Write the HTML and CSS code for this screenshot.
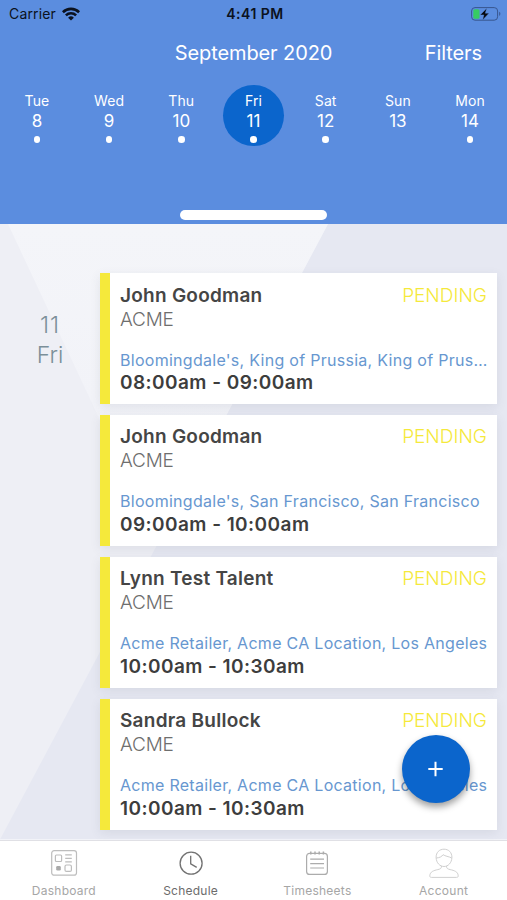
FILE: index.html
```
<!DOCTYPE html>
<html lang="en">
<head>
<meta charset="utf-8">
<title>Schedule</title>
<link rel="stylesheet" href="styles.css">
</head>
<body>
<div class="app">
  <header class="header">
    <div class="status">
      <div class="carrier"><span>Carrier</span>
        <svg width="18" height="14" viewBox="0 0 18 14" fill="none" stroke="#0b1220" stroke-width="2.6"><path d="M.9 5.2a11.6 11.6 0 0 1 16.2 0M3.9 8.4a7.3 7.3 0 0 1 10.2 0"/><path d="M9 13.6 6.1 10.7a4.2 4.2 0 0 1 5.8 0Z" fill="#0b1220" stroke="none"/></svg>
      </div>
      <div class="clock">4:41 PM</div>
      <svg class="battery" width="30" height="14" viewBox="0 0 30 14"><rect x=".6" y=".6" width="26" height="12.6" rx="3.4" fill="none" stroke="#38568f" stroke-width="1"/><path d="M28.2 4.8c1.6.7 1.6 3.5 0 4.2Z" fill="#38568f"/><rect x="2.3" y="2.2" width="6.2" height="9.5" rx="1.5" fill="#36cc62"/><path d="M15.7 1.3 9.2 7.9h3.7l-1.3 5L18 6.2h-3.7Z" fill="#05080f" stroke="#5b8ddf" stroke-width=".4"/></svg>
    </div>
    <div class="titlebar"><h1 class="month">September 2020</h1><a class="filters">Filters</a></div>
    <div class="week">
      <div class="day"><span>Tue</span><b>8</b><i></i></div>
      <div class="day"><span>Wed</span><b>9</b><i></i></div>
      <div class="day"><span>Thu</span><b>10</b><i></i></div>
      <div class="day selected"><span>Fri</span><b>11</b><i></i></div>
      <div class="day"><span>Sat</span><b>12</b><i></i></div>
      <div class="day free"><span>Sun</span><b>13</b><i></i></div>
      <div class="day"><span>Mon</span><b>14</b><i></i></div>
    </div>
    <div class="handle"></div>
  </header>
  <main class="content">
    <svg class="backdrop" viewBox="0 0 507 616" preserveAspectRatio="none">
      <defs><linearGradient id="wedge" x1="0" y1="0" x2="0" y2="1"><stop offset="0" stop-color="#f4f5f9"/><stop offset=".55" stop-color="#f2f3f8"/><stop offset="1" stop-color="#eeeff6"/></linearGradient></defs>
      <path d="M0 0h507v616H0Z" fill="#e6e8f2"/>
      <path d="M0 0h328L0 616Z" fill="#eeeff5"/>
      <path d="M8 0H328L158 320Z" fill="url(#wedge)"/>
    </svg>
    <div class="date"><span class="num">11</span><span>Fri</span></div>
    <div class="list">
      <article class="card">
        <div class="row"><h2>John Goodman</h2><span class="state">PENDING</span></div>
        <p class="company">ACME</p>
        <p class="place">Bloomingdale's, King of Prussia, King of Prus…</p>
        <p class="time">08:00am - 09:00am</p>
      </article>
      <article class="card">
        <div class="row"><h2>John Goodman</h2><span class="state">PENDING</span></div>
        <p class="company">ACME</p>
        <p class="place">Bloomingdale's, San Francisco, San Francisco</p>
        <p class="time">09:00am - 10:00am</p>
      </article>
      <article class="card">
        <div class="row"><h2>Lynn Test Talent</h2><span class="state">PENDING</span></div>
        <p class="company">ACME</p>
        <p class="place">Acme Retailer, Acme CA Location, Los Angeles</p>
        <p class="time">10:00am - 10:30am</p>
      </article>
      <article class="card">
        <div class="row"><h2>Sandra Bullock</h2><span class="state">PENDING</span></div>
        <p class="company">ACME</p>
        <p class="place">Acme Retailer, Acme CA Location, Los Angeles</p>
        <p class="time">10:00am - 10:30am</p>
      </article>
    </div>
    <button class="add" aria-label="Add"><svg width="16" height="16" viewBox="0 0 16 16" stroke="#fff" stroke-width="2"><path d="M7.5 .8v14.4M.3 8h14.4"/></svg></button>
  </main>
  <nav class="tabs">
    <a class="tab">
      <svg width="32" height="32" viewBox="0 0 32 32" fill="none" stroke="#bdbdbd" stroke-width="1.2"><rect x="3.7" y="3.6" width="24.8" height="24.6" rx="2.5"/><rect x="7.4" y="8" width="6.2" height="6.5" rx="1"/><rect x="17" y="18" width="6.4" height="6.4" rx="1.5"/><path d="M17.2 7.8h6.6M17.2 11.3h6.6M17.2 14.8h6.6"/><rect x="8.2" y="19" width="4.6" height="4.6" rx="1.3" fill="#aaa" stroke="none"/></svg>
      <span>Dashboard</span></a>
    <a class="tab active">
      <svg width="32" height="32" viewBox="0 0 32 32" fill="none" stroke="#727272" stroke-width="1.3"><circle cx="16.1" cy="16.2" r="11"/><path d="M15.7 8.8v8l6 3.6"/></svg>
      <span>Schedule</span></a>
    <a class="tab">
      <svg width="32" height="32" viewBox="0 0 32 32" fill="none" stroke="#acacac" stroke-width="1.2"><rect x="5.6" y="6.4" width="20.8" height="21" rx="3"/><path d="M9.2 12.2h13.8M9.2 16.6h13.8M9.2 21h13.8"/><path d="M9.8 4.6v2.8M14 4.6v2.8M18.2 4.6v2.8M22.4 4.6v2.8" stroke-width="1.5"/></svg>
      <span>Timesheets</span></a>
    <a class="tab account">
      <svg width="32" height="32" viewBox="0 0 32 32" fill="none" stroke="#d0d0d0" stroke-width="1"><path d="M8.1 10.5C8 5.4 11.4 2.2 16 2.2s8 3.2 7.9 8.3c-.2 5.4-3.8 9-7.9 9s-7.7-3.6-7.9-9Z"/><path d="M8.2 11c3.4-.2 5.6-1.4 6.9-3.3 2.2 1.6 5.2 1.6 8.7 3.3M13.5 19c0 2.5-1.1 3-3.7 3.6-4 .9-7.8 2-8 6.2 0 1.2.5 1.6 1.7 1.6h25c1.2 0 1.7-.4 1.7-1.6-.2-4.2-4-5.3-8-6.2-2.6-.6-3.7-1.1-3.7-3.6"/></svg>
      <span>Account</span></a>
  </nav>
</div>
</body>
</html>
```
FILE: styles.css
```
* { box-sizing: border-box; }
body { margin: 0; font-family: Inter, "Liberation Sans", sans-serif; }
h1, h2, p { margin: 0; font-weight: 400; }
.app { width: 507px; height: 900px; display: flex; flex-direction: column; overflow: hidden; background: #fff; }

.header { height: 224.4px; flex: none; background: #5b8ddf; color: #fff; display: flex; flex-direction: column; }
.status { height: 27px; display: grid; grid-template-columns: 1fr auto 1fr; align-items: center; padding: 0 6px 0 9px; color: #0b1220; }
.carrier { display: flex; align-items: center; gap: 6px; font-size: 14px; letter-spacing: .15px; }
.clock { font-size: 14px; font-weight: 600; letter-spacing: .5px; }
.battery { justify-self: end; }
.titlebar { height: 50px; display: grid; grid-template-columns: 1fr auto 1fr; align-items: center; padding: 1px 25px 0; }
.month, .filters { font-size: 20px; line-height: 24px; letter-spacing: -.1px; }
.month { grid-column: 2; }
.filters { justify-self: end; }
.week { display: grid; grid-template-columns: repeat(7, 72.2px); justify-content: center; margin-top: 8px; }
.day { display: flex; flex-direction: column; align-items: center; width: 61px; height: 61px; padding-top: 7px; border-radius: 50%; justify-self: center; }
.day span { font-size: 14px; line-height: 18px; letter-spacing: .1px; }
.day b { font-size: 17px; line-height: 22px; font-weight: 400; }
.day i { width: 6.6px; height: 6.6px; margin-top: 4px; border-radius: 50%; background: #fff; }
.selected { background: #0b65cc; }
.free i { visibility: hidden; }
.handle { width: 147px; height: 10px; border-radius: 5px; background: #fff; margin: auto auto 4.5px; }

.content { flex: 1; min-height: 0; position: relative; display: flex; padding: 49px 10px 0 0; }
.backdrop { position: absolute; inset: 0; width: 100%; height: 100%; }
.date { position: relative; width: 100px; padding-top: 37px; display: flex; flex-direction: column; align-items: center; font-size: 23px; line-height: 30px; font-weight: 300; color: #7b8f99; }
.num { letter-spacing: 1px; }
.list { position: relative; flex: 1; min-width: 0; display: flex; flex-direction: column; gap: 11px; }
.card { height: 130.8px; flex: none; background: #fff; border-left: 10px solid #f5e93b; padding: 10.2px 10px 0; box-shadow: 0 3px 10px rgba(70, 75, 100, .1); }
.row { display: flex; justify-content: space-between; height: 24px; line-height: 24px; }
.row h2 { font-size: 19px; font-weight: 600; letter-spacing: .25px; color: #454545; }
.state { font-size: 19px; font-weight: 300; color: #f5e93b; }
.company { font-size: 19px; line-height: 24px; font-weight: 300; letter-spacing: -.2px; color: #6e6e6e; }
.place { margin: 18px -4px 0 0; font-size: 16px; line-height: 21px; letter-spacing: .28px; color: #6797d0; white-space: nowrap; }
.time { padding-top: .8px; font-size: 19px; line-height: 24px; font-weight: 600; letter-spacing: .44px; color: #3d3d3d; }
.add { position: absolute; right: 37px; bottom: 37px; width: 68px; height: 68px; padding: 0; border: 0; border-radius: 50%; background: #0b65cc; display: grid; place-items: center; box-shadow: 0 4px 7px rgba(0, 0, 0, .38); }

.tabs { height: 60px; flex: none; display: grid; grid-template-columns: repeat(4, 1fr); background: #fff; border-top: 1px solid #e0e0e5; position: relative; }
.tab { display: flex; flex-direction: column; align-items: center; padding-top: 6px; color: #a6a6a6; font-size: 12px; line-height: 16px; letter-spacing: .25px; }
.tab svg { margin-left: 1px; }
.tab span { margin: 4px 0 0 1px; }
.account svg, .account span { margin-left: 0; }
.active { color: #6c6c6c; }
```
